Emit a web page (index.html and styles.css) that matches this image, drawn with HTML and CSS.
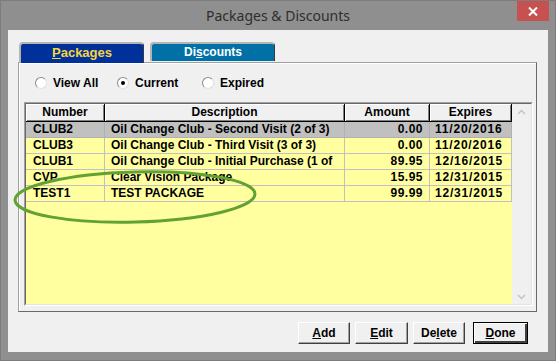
FILE: index.html
```html
<!DOCTYPE html>
<html>
<head>
<meta charset="utf-8">
<link rel="stylesheet" href="styles.css">
</head>
<body>
<div class="window">
  <div class="titlebar">
    <span class="title">Packages &amp; Discounts</span>
    <div class="close"><svg width="10" height="9" viewBox="0 0 10 9"><path d="M1 0.5 L9 8.5 M9 0.5 L1 8.5" stroke="#fff" stroke-width="2"/></svg></div>
  </div>
  <div class="client">
    <div class="tabs">
      <div class="tab active"><u>P</u>ackages</div>
      <div class="tab">Di<u>s</u>counts</div>
    </div>
    <div class="panel">
      <div class="filters">
        <label class="radio"><span class="circle"></span>View All</label>
        <label class="radio"><span class="circle checked"></span>Current</label>
        <label class="radio"><span class="circle"></span>Expired</label>
      </div>
      <div class="list">
        <div class="list-inner">
          <div class="table">
            <div class="row head">
              <div class="cell c-num">Number</div>
              <div class="cell c-desc">Description</div>
              <div class="cell c-amt">Amount</div>
              <div class="cell c-exp">Expires</div>
            </div>
            <div class="row selected">
              <div class="cell c-num">CLUB2</div>
              <div class="cell c-desc">Oil Change Club - Second Visit (2 of 3)</div>
              <div class="cell c-amt">0.00</div>
              <div class="cell c-exp">11/20/2016</div>
            </div>
            <div class="row">
              <div class="cell c-num">CLUB3</div>
              <div class="cell c-desc">Oil Change Club - Third Visit (3 of 3)</div>
              <div class="cell c-amt">0.00</div>
              <div class="cell c-exp">11/20/2016</div>
            </div>
            <div class="row">
              <div class="cell c-num">CLUB1</div>
              <div class="cell c-desc">Oil Change Club - Initial Purchase (1 of</div>
              <div class="cell c-amt">89.95</div>
              <div class="cell c-exp">12/16/2015</div>
            </div>
            <div class="row">
              <div class="cell c-num">CVP</div>
              <div class="cell c-desc">Clear Vision Package</div>
              <div class="cell c-amt">15.95</div>
              <div class="cell c-exp">12/31/2015</div>
            </div>
            <div class="row">
              <div class="cell c-num">TEST1</div>
              <div class="cell c-desc">TEST PACKAGE</div>
              <div class="cell c-amt">99.99</div>
              <div class="cell c-exp">12/31/2015</div>
            </div>
          </div>
          <div class="scrollbar">
            <svg width="9" height="6" viewBox="0 0 9 6"><polyline points="1,5 4.5,1.5 8,5" fill="none" stroke="#c4c4c4" stroke-width="1.5"/></svg>
            <svg width="9" height="6" viewBox="0 0 9 6"><polyline points="1,1 4.5,4.5 8,1" fill="none" stroke="#c4c4c4" stroke-width="1.5"/></svg>
          </div>
        </div>
      </div>
    </div>
    <div class="buttons">
      <div class="btn w52"><u>A</u>dd</div>
      <div class="btn w53"><u>E</u>dit</div>
      <div class="btn w52">De<u>l</u>ete</div>
      <div class="btn default"><u>D</u>one</div>
    </div>
  </div>
  <svg class="annotation" width="556" height="361" viewBox="0 0 556 361">
    <ellipse cx="135" cy="197" rx="120" ry="25" fill="none" stroke="#62a232" stroke-width="3" transform="rotate(-1.5 135 197)"/>
  </svg>
</div>
</body>
</html>
```
FILE: styles.css
```css
* { box-sizing: border-box; }
html, body { margin: 0; padding: 0; }
body {
  width: 556px;
  height: 361px;
  overflow: hidden;
  background: #8f8f8f;
  font-family: "Liberation Sans", Arial, sans-serif;
}
.window {
  position: relative;
  width: 556px;
  height: 361px;
  background: #8f8f8f;
  border: 1px solid #7c7c7c;
  display: flex;
  flex-direction: column;
}
.titlebar {
  height: 29px;
  display: grid;
  grid-template-columns: 1fr auto 1fr;
}
.title {
  grid-column: 2;
  font-family: "Noto Sans", "Open Sans", sans-serif;
  font-size: 14px;
  color: #2e2e2e;
  line-height: 29px;
}
.close {
  grid-column: 3;
  justify-self: end;
  align-self: start;
  margin-right: 6px;
  width: 32px;
  height: 20px;
  background: #c75050;
  display: flex;
  align-items: center;
  justify-content: center;
}
.client {
  margin: 0 7px;
  height: 322px;
  background: #f0f0f0;
  padding-top: 12px;
}
.tabs {
  display: flex;
  align-items: flex-start;
  gap: 6px;
  padding-left: 11px;
  height: 20px;
}
.tab {
  position: relative;
  width: 125px;
  height: 19px;
  background: #0070a6;
  color: #fff;
  font-weight: bold;
  font-size: 12px;
  text-align: center;
  line-height: 16px;
  border-top: 2px solid #b4b4b4;
  border-left: 2px solid #b4b4b4;
  border-right: 1px solid #3a3a3a;
  border-radius: 4px 4px 0 0;
}
.tab.active {
  height: 21px;
  margin-bottom: -1px;
  z-index: 1;
  background: #00309a;
  color: #f8d53e;
  font-size: 13px;
  line-height: 17px;
}
.panel {
  margin-left: 10px;
  width: 519px;
  height: 250px;
  border-style: solid;
  border-width: 1px;
  border-color: #a0a0a0 #696969 #696969 #a0a0a0;
  box-shadow: inset 1px 1px 0 #ffffff;
  padding: 11px 0 0 5px;
}
.filters {
  height: 18px;
  padding-left: 11px;
  display: grid;
  grid-template-columns: 82px 85px auto;
  align-items: center;
}
.radio {
  display: flex;
  align-items: center;
  gap: 6px;
  font-size: 12px;
  font-weight: bold;
  color: #000;
}
.circle {
  width: 12px;
  height: 12px;
  border-radius: 50%;
  background: #fff;
  border: 1px solid;
  border-color: #8a8a8a #e0e0e0 #e0e0e0 #8a8a8a;
  display: flex;
  align-items: center;
  justify-content: center;
}
.circle.checked::after {
  content: "";
  width: 4px;
  height: 4px;
  border-radius: 50%;
  background: #000;
}
.list {
  margin-top: 10px;
  width: 509px;
  height: 204px;
  border: 1px solid;
  border-color: #a0a0a0 #ffffff #ffffff #a0a0a0;
}
.list-inner {
  height: 100%;
  border: 1px solid;
  border-color: #696969 #e3e3e3 #e3e3e3 #696969;
  display: flex;
}
.table {
  width: 486px;
  flex: none;
  background: #ffffa0;
}
.scrollbar {
  flex: 1;
  background: #f0f0f0;
  display: flex;
  flex-direction: column;
  justify-content: space-between;
  align-items: center;
  padding: 5px 0 4px;
}
.row {
  display: grid;
  grid-template-columns: 79px 240px 85px 82px;
  height: 16px;
  font-size: 12px;
  font-weight: bold;
  color: #000;
}
.row .cell {
  border-right: 1px solid #c0c0c0;
  border-bottom: 1px solid #c0c0c0;
  line-height: 15px;
  white-space: nowrap;
  overflow: hidden;
  padding: 0 6px;
}
.row.selected { background: #c0c0c0; }
.row.selected .cell { border-color: #b0b0b0; }
.row .c-num { padding-left: 7px; }
.row .c-amt { text-align: right; letter-spacing: 0.5px; padding-right: 6px; }
.row .c-exp { padding-left: 5px; letter-spacing: 0.8px; }
.row.head {
  height: 18px;
  background: #f0f0f0;
}
.row.head .cell {
  text-align: center;
  letter-spacing: 0;
  padding: 0 2px;
  line-height: 16px;
  border-right: 1px solid #000;
  border-bottom: 1px solid #000;
  box-shadow: inset 1px 1px 0 #ffffff, inset -1px -1px 0 #808080;
}
.buttons {
  display: flex;
  justify-content: flex-end;
  gap: 5px;
  padding-right: 20px;
  margin-top: 10px;
}
.btn {
  height: 22px;
  background: #f0f0f0;
  border: 1px solid;
  border-color: #ffffff #404040 #404040 #ffffff;
  box-shadow: inset -1px -1px 0 #a0a0a0;
  font-size: 12px;
  font-weight: bold;
  color: #000;
  display: flex;
  align-items: center;
  justify-content: center;
}
.w52 { width: 52px; }
.w53 { width: 53px; }
.btn.default {
  width: 55px;
  margin-left: 3px;
  border-color: #000;
  box-shadow: inset 1px 1px 0 #ffffff, inset -2px -2px 0 #404040;
}
.annotation {
  position: absolute;
  left: -1px;
  top: -1px;
  pointer-events: none;
}
```
